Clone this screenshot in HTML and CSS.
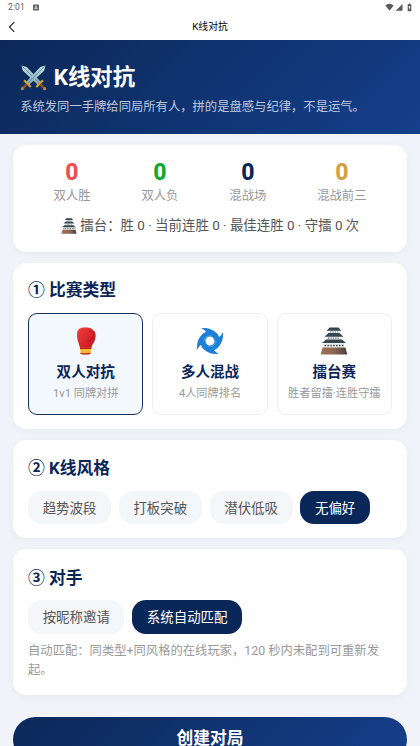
FILE: index.html
```html
<!DOCTYPE html>
<html lang="zh-CN">
<head>
<meta charset="utf-8">
<meta name="viewport" content="width=device-width, initial-scale=1">
<title>K线对抗</title>
<link rel="stylesheet" href="styles.css">
</head>
<body>
<svg width="0" height="0" class="defs">
  <defs>
    <linearGradient id="stone" x1="0" y1="0" x2="1" y2="0"><stop offset="0" stop-color="#a5714f"/><stop offset=".55" stop-color="#896453"/><stop offset="1" stop-color="#493c3b"/></linearGradient>
    <linearGradient id="glove" x1="0" y1="0" x2="1" y2="1"><stop offset="0" stop-color="#f0403e"/><stop offset="1" stop-color="#c3131c"/></linearGradient>
    <linearGradient id="steel" x1="0" y1="0" x2="1" y2="1"><stop offset="0" stop-color="#c5e2e6"/><stop offset="1" stop-color="#7ba5ad"/></linearGradient>
    <symbol id="castle" viewBox="0 0 28 28">
      <path d="M8 3h12v5H8zM6 9h16v5H6zM4 15h20v7H4z" fill="#eef1f1"/>
      <path d="M2.500 20.500h23l1.800 7H.7z" fill="url(#stone)"/>
      <path d="M9.500.500h9l2.800 3.200H6.700zM8.500 6h11l4 3.800h-19zM6 12.500h16l4 3.500H2z" fill="#34464f"/>
      <path d="M10 5h8M8 11.200h12" stroke="#6a7a80" stroke-width="1.200" stroke-dasharray="1.200 1.200"/>
      <path d="M4.500 18.600h19" stroke="#34464f" stroke-width="1.500" stroke-dasharray="1.500 1.400"/>
    </symbol>
    <symbol id="sword" viewBox="0 0 28 28">
      <path d="M1.500 1.500 7 3l15 16-3 3L3 7z" fill="url(#steel)"/>
      <path d="m2 2 18.500 18.500" stroke="#668e98" stroke-width=".9"/>
      <path d="m16 23 7-7 1.600 1.600-7 7z" fill="#d5a23c"/>
      <path d="m21 21 4 4" stroke="#845029" stroke-width="2.600"/>
      <circle cx="25.600" cy="25.600" r="1.700" fill="#c1803d"/>
    </symbol>
  </defs>
</svg>
<header class="status">
  <span class="time">2:01</span>
  <svg class="app" viewBox="0 0 7 7"><rect width="7" height="7" rx="1" fill="#5c5c5c"/><path d="M1.700 5.500 3.500 1.500l1.800 4M2.300 4.500h2.400" fill="none" stroke="#fff" stroke-width=".8"/></svg>
  <svg class="signals" viewBox="0 0 28 9"><path d="M.3 2.500Q4.500-1 8.700 2.500L4.500 7.700zM17.500 1v6.700h-6.800z" fill="#5b5b5b"/><path d="M23.800.5h1.400v.8h1.100v6.900h-3.600V1.300h1.100z" fill="#5b5b5b"/><path d="M24 3h1v1.500h.6l-1.200 2.300V5h-.7z" fill="#fff"/></svg>
</header>
<nav class="nav">
  <svg class="back" viewBox="0 0 8 12"><path d="M6.300 1.200 1.400 6l4.900 4.800" fill="none" stroke="#222" stroke-width="1.100"/></svg>
  <span>K线对抗</span>
</nav>
<section class="hero">
  <h1>
    <svg class="swords" viewBox="0 0 28 28">
      <use href="#sword" width="28" height="28"/>
      <use href="#sword" width="28" height="28" transform="matrix(-1 0 0 1 28 0)"/>
    </svg>
    <span>K线对抗</span>
  </h1>
  <p>系统发同一手牌给同局所有人，拼的是盘感与纪律，不是运气。</p>
</section>
<main>
  <section class="card stats">
    <div class="stat-row">
      <div class="stat red"><b>0</b><span>双人胜</span></div>
      <div class="stat green"><b>0</b><span>双人负</span></div>
      <div class="stat navy"><b>0</b><span>混战场</span></div>
      <div class="stat gold"><b>0</b><span>混战前三</span></div>
    </div>
    <div class="arena"><svg><use href="#castle"/></svg><span>擂台：胜 0 · 当前连胜 0 · 最佳连胜 0 · 守擂 0 次</span></div>
  </section>
  <section class="card match">
    <h2>① 比赛类型</h2>
    <div class="types">
      <div class="type active">
        <svg viewBox="0 0 28 28"><path d="M5 8C5 2 8 .5 13 .5c4 0 7 .5 8.500 3 2 1 2.500 4 2 7C23 15 20 17 19.500 21H8C7.500 17 5 14 5 8z" fill="url(#glove)"/><path d="M17 5c3-2 5 0 4.500 4-.5 3-3 5-6 5" fill="none" stroke="#a60e19" stroke-width=".8"/><path d="M8 20.500h11.300l-.7 6.300q-5 1.400-10 0z" fill="#f8b936"/><path d="M8 20.500h11.300v1.500H8zM8.500 25.700q5 1.300 10 0v1.200q-5 1.300-10 0z" fill="#bc1820"/></svg>
        <strong>双人对抗</strong><small>1v1 同牌对拼</small>
      </div>
      <div class="type">
        <svg viewBox="0 0 28 28"><circle cx="14" cy="14" r="7.300" fill="none" stroke="#1c80d8" stroke-width="5.600"/><g fill="#1c80d8"><path id="blade" d="M5 1C11 .5 18 2 22 8l-9 1C11 5.500 9 3 5 1z"/><use href="#blade" transform="rotate(90 14 14)"/><use href="#blade" transform="rotate(180 14 14)"/><use href="#blade" transform="rotate(270 14 14)"/></g><path d="M8 14c.5-4 4-6 8-5M20 14c-.5 4-4 6-8 5" fill="none" stroke="#54a8ec" stroke-width="1"/></svg>
        <strong>多人混战</strong><small>4人同牌排名</small>
      </div>
      <div class="type"><svg><use href="#castle"/></svg><strong>擂台赛</strong><small>胜者留擂·连胜守擂</small></div>
    </div>
  </section>
  <section class="card style">
    <h2>② K线风格</h2>
    <div class="chips"><span class="chip">趋势波段</span><span class="chip">打板突破</span><span class="chip">潜伏低吸</span><span class="chip on">无偏好</span></div>
  </section>
  <section class="card rival">
    <h2>③ 对手</h2>
    <div class="chips"><span class="chip">按昵称邀请</span><span class="chip on">系统自动匹配</span></div>
    <p>自动匹配：同类型+同风格的在线玩家，120 秒内未配到可重新发起。</p>
  </section>
  <button class="create">创建对局</button>
</main>
</body>
</html>
```
FILE: styles.css
```css
* { box-sizing: border-box; }
html { overflow: hidden; }
body {
  margin: 0;
  height: 746px;
  overflow: hidden;
  background: #f2f3f8;
  font-family: Roboto, "Noto Sans CJK SC", sans-serif;
  color: #0b2559;
}
h1, h2, p { margin: 0; }
svg { display: block; flex: none; }
.defs { position: absolute; }
.status {
  height: 14px;
  padding: 0 8px;
  background: #fff;
  display: flex;
  align-items: center;
  font-size: 8.500px;
  line-height: 14px;
  letter-spacing: .1px;
  color: #5b5b5b;
}
.app { width: 6px; height: 7px; margin-left: 8px; }
.signals { width: 28px; height: 9px; margin-left: auto; margin-right: -1px; }
.nav {
  height: 26px;
  background: #fff;
  display: grid;
  grid-template-columns: 40px 1fr 40px;
  align-items: center;
  text-align: center;
  font-size: 9.800px;
  font-weight: 400;
  line-height: 26px;
  color: #000;
}
.back { width: 8px; height: 12px; margin-left: 8px; }
.hero {
  height: 93.500px;
  padding: 21px 20.200px 0;
  background: linear-gradient(135deg, #0b2858, #153f8b);
  color: #fff;
}
.hero h1 {
  display: flex;
  align-items: center;
  gap: 6.500px;
  height: 32px;
  font-size: 22.400px;
  font-weight: 700;
  line-height: 32px;
}
.swords { width: 27px; height: 27px; }
.hero p {
  margin-top: 5px;
  font-size: 12.320px;
  line-height: 19px;
  color: #bdc8df;
  white-space: nowrap;
}
main {
  padding: 11.500px 13.440px 0;
  display: flex;
  flex-direction: column;
  gap: 11.200px;
}
.card {
  padding: 0 14.600px;
  border-radius: 13.400px;
  background: #fff;
  box-shadow: 0 2px 9px rgba(11, 37, 89, .04);
}
.stats { height: 106.500px; padding-top: 13px; }
.stat-row { display: flex; justify-content: space-around; }
.stat { display: flex; flex-direction: column; align-items: center; }
.stat b { font-size: 23px; font-weight: 800; line-height: 29px; }
.stat span { font-size: 12.320px; line-height: 18px; color: #999; }
.red b { color: #ec4e54; }
.green b { color: #0dab32; }
.gold b { color: #d2a146; }
.arena {
  margin-top: 11px;
  display: flex;
  justify-content: center;
  align-items: center;
  gap: 3.500px;
  font-size: 13.440px;
  line-height: 20px;
  color: #555;
  white-space: nowrap;
}
.arena svg { width: 16px; height: 16px; }
.match { height: 166px; padding-top: 15px; }
h2 { font-size: 16.800px; line-height: 25px; font-weight: 700; }
.types { display: grid; grid-template-columns: repeat(3, 1fr); gap: 9px; margin-top: 10px; }
.type {
  height: 102px;
  padding-top: 13px;
  border: 1px solid #eceef2;
  border-radius: 9px;
  display: flex;
  flex-direction: column;
  align-items: center;
  white-space: nowrap;
}
.type.active { border-color: #18305f; background: #f3f8fe; }
.type svg { width: 28px; height: 28px; }
.type strong { margin-top: 6px; font-size: 14.560px; line-height: 22px; }
.type small { margin-top: 3px; font-size: 11.200px; line-height: 16px; color: #999; }
.style { height: 98px; padding-top: 16.500px; }
.chips { display: flex; gap: 7.840px; margin-top: 9.400px; }
.chip {
  height: 33.300px;
  padding: 0 14.600px;
  border-radius: 14px;
  background: #f5f6fa;
  color: #555;
  font-size: 13.440px;
  line-height: 35px;
  white-space: nowrap;
}
.chip.on { background: #0a2759; color: #fff; }
.rival { height: 145.500px; padding-top: 17px; }
.rival p { margin-top: 8px; font-size: 12.320px; line-height: 19.700px; color: #999; }
.create {
  height: 45px;
  margin: 11px 0 0;
  padding: 0 0 3px;
  border: 0;
  border-radius: 23px;
  background: linear-gradient(135deg, #0b2858, #153f8b);
  color: #fff;
  font: 700 16.800px/36px Roboto, "Noto Sans CJK SC", sans-serif;
}
```
